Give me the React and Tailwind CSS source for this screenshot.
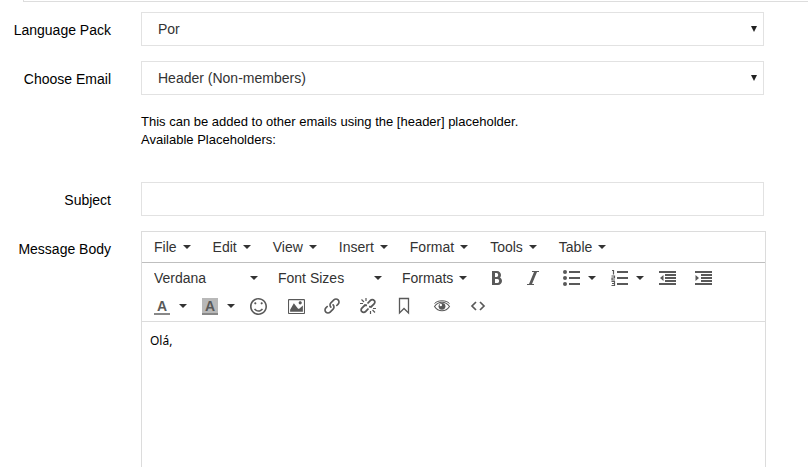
import { ImBold, ImItalic, ImSmile, ImImage, ImLink } from 'react-icons/im'

const MENUS = ['File', 'Edit', 'View', 'Insert', 'Format', 'Tools', 'Table']

/* ── Small shared pieces ── */
function Caret() {
  return (
    <svg className="w-2 h-1 shrink-0 pointer-events-none" viewBox="0 0 8 4" fill="#333">
      <path d="M0 0h8L4 4z" />
    </svg>
  )
}

function Icon({ children }) {
  return (
    <svg className="w-4 h-4 shrink-0 overflow-visible" viewBox="0 0 16 16" fill="currentColor">
      {children}
    </svg>
  )
}

function ToolButton({ label, children }) {
  return (
    <button type="button" aria-label={label} className="flex items-center w-9 h-7 pl-2.5 text-[#595959]">
      {children}
    </button>
  )
}

function SplitButton({ label, children }) {
  return (
    <button type="button" aria-label={label} className="flex items-center gap-[9px] h-7 pl-2.5 pr-[5px] text-[#595959]">
      {children}
      <Caret />
    </button>
  )
}

function MenuButton({ children }) {
  return (
    <button type="button" className="flex items-center gap-1.5 h-7 px-2.5">
      {children}
      <Caret />
    </button>
  )
}

function ToolSelect({ label, value }) {
  return (
    <div className="relative flex items-center w-31 h-7">
      <select aria-label={label} className="appearance-none w-full h-7 pl-2.5 pr-6 outline-none">
        <option>{value}</option>
      </select>
      <div className="absolute right-2.5 pointer-events-none">
        <Caret />
      </div>
    </div>
  )
}

function FormSelect({ id, value }) {
  return (
    <div className="relative">
      <select
        id={id}
        className="block appearance-none w-full h-[34px] pl-4 pr-8 border border-[#e2e2e2] bg-white text-[#333] outline-none"
      >
        <option>{value}</option>
      </select>
      <svg className="absolute right-[7px] top-3.5 w-1.5 h-1.5 pointer-events-none" viewBox="0 0 6 6" fill="#222">
        <path d="M0 0h6L3 6z" />
      </svg>
    </div>
  )
}

function Label({ htmlFor, children }) {
  return (
    <label htmlFor={htmlFor} className="pt-2 leading-5 text-right text-black">
      {children}
    </label>
  )
}

/* ── Toolbar drawings ── */
function BulletList() {
  return (
    <Icon>
      <path d="M6 1h11v2H6zM6 7h11v2H6zM6 13h11v2H6z" />
      <circle cx="2" cy="2" r="2" />
      <circle cx="2" cy="8" r="2" />
      <circle cx="2" cy="14" r="2" />
    </Icon>
  )
}

function NumberList() {
  return (
    <Icon>
      <path d="M6 1h11v2H6zM6 7h11v2H6zM6 13h11v2H6z" />
      <path
        d="M1 .5h1.5V4.500M.5 6h3v2h-2.500v2h3M.5 11.500h3v4h-3M1 13.500h2.500"
        fill="none"
        stroke="currentColor"
        strokeWidth="1.200"
      />
    </Icon>
  )
}

function Outdent() {
  return (
    <Icon>
      <path d="M0 1h17v2H0zM6 4h11v2H6zM6 7h11v2H6zM6 10h11v2H6zM0 13h17v2H0zM4.5 5v6L1 8z" />
    </Icon>
  )
}

function Indent() {
  return (
    <Icon>
      <path d="M0 1h17v2H0zM6 4h11v2H6zM6 7h11v2H6zM6 10h11v2H6zM0 13h17v2H0zM.5 5v6L4 8z" />
    </Icon>
  )
}

function Unlink() {
  return (
    <Icon>
      <g fill="none" stroke="currentColor" strokeWidth="1.800">
        <path d="M7.500 5.500l3-3.200a2.500 2.500 0 0 1 3.600 0a2.500 2.500 0 0 1 0 3.600L11 9l-2-.3" />
        <path d="M8.500 10.500l-3 3.200a2.500 2.500 0 0 1-3.600 0a2.500 2.500 0 0 1 0-3.600L5 7l2 .3" />
      </g>
      <path
        d="M6 0v3M1.500 1.500l2.500 2.500M0 5.500h3M10.500 13v3M12.500 12l2.500 2.500M13 10.500h3"
        fill="none"
        stroke="currentColor"
        strokeWidth="1.200"
      />
    </Icon>
  )
}

function Bookmark() {
  return (
    <Icon>
      <path d="M3.500 .5h9v14.500L8 10.500 3.500 15z" fill="none" stroke="currentColor" strokeWidth="1.300" />
    </Icon>
  )
}

function Eye() {
  return (
    <Icon>
      <path
        d="M.5 8.500C2.500 5.500 5 4.200 8 4.200s5.500 1.300 7.500 4.300c-2 3-4.500 4.300-7.500 4.300S2.500 11.500.5 8.500z"
        fill="none"
        stroke="currentColor"
        strokeWidth="1.100"
      />
      <path d="M.5 5.500C2.500 3.500 5 2.800 8 2.800s5.500.7 7.500 2.700" fill="none" stroke="currentColor" />
      <circle cx="8" cy="8.300" r="3.400" />
      <circle cx="6.800" cy="7" r="1.200" fill="#fff" />
    </Icon>
  )
}

function Code() {
  return (
    <Icon>
      <path d="M6 4L2 8l4 4M10 4l4 4-4 4" fill="none" stroke="currentColor" strokeWidth="1.700" />
    </Icon>
  )
}

/* ── Rich text editor ── */
function Editor() {
  return (
    <div className="flex flex-col min-h-0 -mr-0.5 border border-b-0 border-[#dcdcdc] text-[#333]">
      <div className="flex flex-wrap items-center gap-x-0.5 px-0.5 py-px border-b border-[#bfbfbf]">
        {MENUS.map((name) => (
          <MenuButton key={name}>{name}</MenuButton>
        ))}
      </div>

      <div className="px-0.5 py-px border-b border-[#dcdcdc]">
        <div className="flex flex-wrap gap-x-0.5">
          <div className="flex">
            <ToolSelect label="Font family" value="Verdana" />
            <ToolSelect label="Font size" value="Font Sizes" />
            <MenuButton>Formats</MenuButton>
          </div>
          <div className="flex">
            <ToolButton label="Bold"><ImBold className="w-4 h-4 stroke-current" /></ToolButton>
            <ToolButton label="Italic"><ImItalic className="w-4 h-4 stroke-current" /></ToolButton>
          </div>
          <div className="flex">
            <SplitButton label="Bullet list"><BulletList /></SplitButton>
            <SplitButton label="Numbered list"><NumberList /></SplitButton>
            <ToolButton label="Decrease indent"><Outdent /></ToolButton>
            <ToolButton label="Increase indent"><Indent /></ToolButton>
          </div>
        </div>
        <div className="flex flex-wrap gap-x-0.5">
          <div className="flex">
            <SplitButton label="Text color">
              <span className="w-4 h-[17px] border-b-2 border-[#888] text-center font-bold leading-4">A</span>
            </SplitButton>
            <SplitButton label="Background color">
              <span className="w-4 h-[17px] border-b-2 border-[#888] bg-[#b8b8b8] text-center font-bold leading-4">A</span>
            </SplitButton>
            <ToolButton label="Emoticons"><ImSmile className="w-[17px] h-[17px]" /></ToolButton>
          </div>
          <div className="flex">
            <ToolButton label="Insert image"><ImImage className="w-[17px] h-[17px]" /></ToolButton>
            <ToolButton label="Insert link"><ImLink className="w-4 h-4" /></ToolButton>
            <ToolButton label="Remove link"><Unlink /></ToolButton>
            <ToolButton label="Anchor"><Bookmark /></ToolButton>
          </div>
          <div className="flex">
            <ToolButton label="Preview"><Eye /></ToolButton>
            <ToolButton label="Source code"><Code /></ToolButton>
          </div>
        </div>
      </div>

      <textarea
        id="body"
        defaultValue="Olá,"
        className="block flex-1 w-full min-h-0 px-2 py-2.5 resize-none outline-none text-xs leading-[18px] text-black font-['Noto_Sans',sans-serif]"
      />
    </div>
  )
}

export default function App() {
  return (
    <div className="flex flex-col h-screen overflow-hidden bg-white text-sm font-['Liberation_Sans',Arial,sans-serif]">
      <div className="ml-[23px] h-0.5 shrink-0 border-l border-b border-[#ddd]" />
      <form className="grid flex-1 min-h-0 grid-cols-[111px_minmax(0,1fr)] grid-rows-[auto_auto_auto_auto_minmax(0,1fr)] gap-x-[30px] gap-y-[15px] pt-2.5 pr-11">
        <Label htmlFor="language">Language Pack</Label>
        <FormSelect id="language" value="Por" />

        <Label htmlFor="email">Choose Email</Label>
        <FormSelect id="email" value="Header (Non-members)" />

        <div className="col-start-2 pt-[3px] pb-[18px] text-[13px] leading-[18px] text-black">
          <p>This can be added to other emails using the [header] placeholder.</p>
          <p>Available Placeholders:</p>
        </div>

        <Label htmlFor="subject">Subject</Label>
        <input id="subject" type="text" className="h-[34px] px-4 border border-[#e2e2e2] text-[#333] outline-none" />

        <Label htmlFor="body">Message Body</Label>
        <Editor />
      </form>
    </div>
  )
}
